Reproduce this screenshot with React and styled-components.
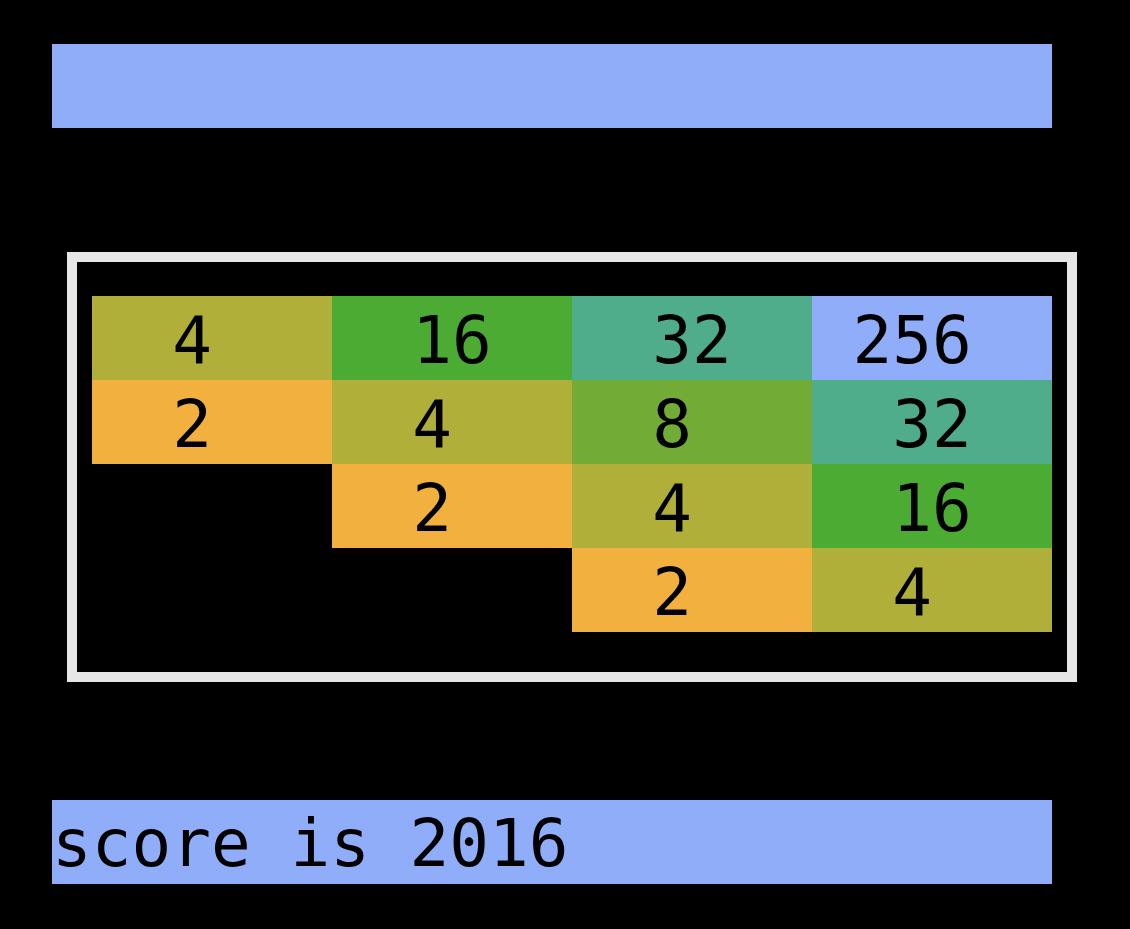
import { createGlobalStyle } from 'styled-components';
import styled from 'styled-components';

const GlobalStyle = createGlobalStyle`
  html, body {
    margin: 0;
    padding: 0;
    background: #000000;
  }
  body {
    font-family: "DejaVu Sans Mono", "Liberation Mono", monospace;
  }
`

const Page = styled.div`
  width: 1130px;
  height: 929px;
  background: #000000;
  padding-top: 44px;
  box-sizing: border-box;
`

const Bar = styled.div`
  margin-left: 52px;
  width: 1000px;
  height: 84px;
  box-sizing: border-box;
  padding-top: 4px;
  background: #8fadf8;
  color: #000000;
  font-size: 66px;
  line-height: 80px;
  white-space: pre;
`

const Board = styled.div`
  margin: 124px 0 118px 67px;
  width: 1010px;
  box-sizing: border-box;
  border: 10px solid #e6e6e6;
  padding: 34px 15px 40px 15px;
`

const Grid = styled.div`
  display: grid;
  grid-template-columns: repeat(4, 240px);
  grid-auto-rows: 84px;
`

const colors = {
  2: '#f2b13f',
  4: '#afaf3a',
  8: '#72ab35',
  16: '#4cab32',
  32: '#4fad8b',
  256: '#8fadf8',
}

const Tile = styled.div`
  background: ${p => (p.$value ? colors[p.$value] : 'transparent')};
  color: #000000;
  font-size: 66px;
  line-height: 84px;
  padding-top: 3px;
  box-sizing: border-box;
  text-align: center;
  white-space: pre;
`

// pad like str.center(4)
function center(v) {
  if (!v) return '';
  let s = String(v);
  let pad = 4 - s.length;
  let left = Math.floor(pad / 2);
  if (s.length === 1) left = 1;
  return ' '.repeat(left) + s + ' '.repeat(pad - left);
}

const board = [
  [4, 16, 32, 256],
  [2, 4, 8, 32],
  [0, 2, 4, 16],
  [0, 0, 2, 4],
];

export default function App() {
  return (
    <Page>
      <GlobalStyle />
      <Bar />
      <Board>
        <Grid>
          {board.flat().map((v, i) => (
            <Tile key={i} $value={v}>{center(v)}</Tile>
          ))}
        </Grid>
      </Board>
      <Bar>score is 2016</Bar>
    </Page>
  );
}
